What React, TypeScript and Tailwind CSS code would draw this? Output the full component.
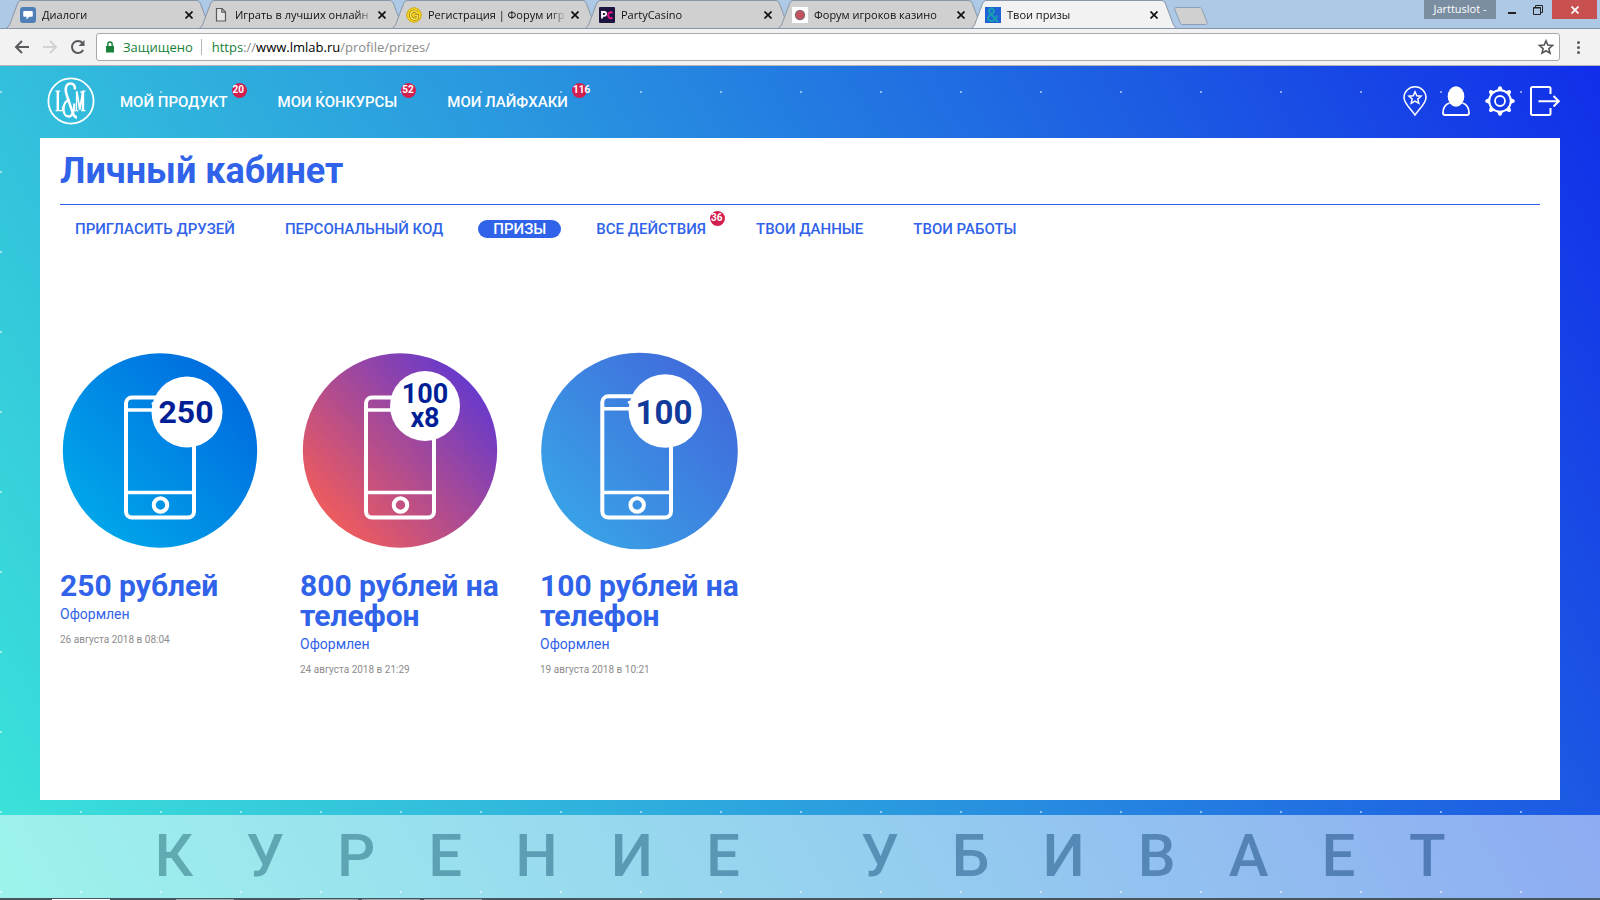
import type { ReactNode } from "react";
import clsx from "clsx";

type BrowserTab = {
  title: string;
  icon: ReactNode;
  active?: boolean;
};

const browserTabs: BrowserTab[] = [
  {
    title: "Диалоги",
    icon: (
      <svg viewBox="0 0 16 16" className="size-4">
        <rect width="16" height="16" rx="3" fill="#4f7fb9" />
        <path d="M4.5 4h7c.8 0 1.300.5 1.300 1.300v3.200c0 .8-.5 1.300-1.300 1.300H9.300L6.500 12.500V9.800h-2c-.8 0-1.300-.5-1.300-1.300V5.300C3.200 4.500 3.700 4 4.500 4z" fill="#fff" />
      </svg>
    ),
  },
  {
    title: "Играть в лучших онлайн",
    icon: (
      <svg viewBox="0 0 16 16" className="size-4" fill="none" stroke="#5a5a5a" strokeWidth="1.2">
        <path d="M3.500 1.500h5.500l3.500 3.500v9h-9z" fill="#e4e4e4" />
        <path d="M8.800 1.500V5.200h3.700" />
      </svg>
    ),
  },
  {
    title: "Регистрация | Форум игр",
    icon: (
      <svg viewBox="0 0 16 16" className="size-4">
        <circle cx="8" cy="8" r="7.300" fill="#fbd51c" stroke="#c9a81c" />
        <path d="M11.500 5.600C9.500 3.200 4.500 3.800 4.500 8s4.500 5.200 7 3.200V8.500H8.500" fill="none" stroke="#8f7a1e" strokeWidth="3" />
        <path d="M11.500 5.600C9.500 3.200 4.500 3.800 4.500 8s4.500 5.200 7 3.200V8.500H8.500" fill="none" stroke="#ffe54a" strokeWidth="1.600" />
      </svg>
    ),
  },
  {
    title: "PartyCasino",
    icon: (
      <svg viewBox="0 0 16 16" className="size-4" fill="none" strokeWidth="1.800">
        <rect width="16" height="16" rx="1" fill="#1d1440" />
        <path d="M3 11.500V5h2.200a1.800 1.800 0 0 1 0 3.800H3" stroke="#fff" />
        <path d="M13.500 6A2.600 3 0 1 0 13.500 10.500" stroke="#e5178a" />
      </svg>
    ),
  },
  {
    title: "Форум игроков казино",
    icon: (
      <svg viewBox="0 0 16 16" className="size-4">
        <rect width="16" height="16" fill="#fff" />
        <circle cx="8" cy="8" r="4.500" fill="#c4525c" stroke="#8a6a70" strokeWidth="1.400" />
      </svg>
    ),
  },
  {
    title: "Твои призы",
    active: true,
    icon: (
      <svg viewBox="0 0 16 16" className="size-4">
        <rect width="16" height="16" fill="#1f62d6" />
        <path d="M13 15L4.500 5.500C3.200 3.500 4.500 1.500 6.500 1.500s3.500 2.500 1.500 4.500L4.500 8.500c-2.500 2-1.500 5.500 2 5.500 2.800 0 5-2.500 5.500-5.500" fill="none" stroke="#17a0b0" strokeWidth="2" />
      </svg>
    ),
  },
];

const mainNav = [
  { label: "Мой продукт", count: 20 },
  { label: "Мои конкурсы", count: 52 },
  { label: "Мои лайфхаки", count: 116 },
];

const profileNav = [
  { label: "Пригласить друзей" },
  { label: "Персональный код" },
  { label: "Призы", active: true },
  { label: "Все действия", count: 36 },
  { label: "Твои данные" },
  { label: "Твои работы" },
];

const prizes = [
  {
    id: "p250",
    title: "250 рублей",
    status: "Оформлен",
    date: "26 августа 2018 в 08:04",
    from: "#00a6ea",
    to: "#006cdf",
    ink: "#001f96",
    lines: ["250"],
    size: 32,
    textX: 126,
    baseline: 73,
    disc: { cx: 100, cy: 100.5, r: 97.2 },
    phone: { x: 66, y: 47.5, width: 68 },
    badge: { cx: 127, cy: 62, r: 35.5 },
  },
  {
    id: "p800",
    title: "800 рублей на телефон",
    status: "Оформлен",
    date: "24 августа 2018 в 21:29",
    from: "#f05c5c",
    to: "#6639cc",
    ink: "#001f96",
    lines: ["100", "x8"],
    size: 27,
    textX: 125,
    baseline: 53,
    disc: { cx: 100, cy: 100.5, r: 97.2 },
    phone: { x: 66, y: 47.5, width: 68 },
    badge: { cx: 125, cy: 56, r: 35 },
  },
  {
    id: "p100",
    title: "100 рублей на телефон",
    status: "Оформлен",
    date: "19 августа 2018 в 10:21",
    from: "#39a2e7",
    to: "#406bdb",
    ink: "#123a9a",
    lines: ["100"],
    size: 33,
    textX: 124,
    baseline: 74,
    disc: { cx: 99.5, cy: 101, r: 98.3 },
    phone: { x: 62.3, y: 46.3, width: 68.7 },
    badge: { cx: 125.3, cy: 61, r: 36.7 },
  },
];

function TabShape({ active }: { active?: boolean }) {
  return (
    <svg viewBox="0 0 206 29" preserveAspectRatio="none" className="absolute inset-0 size-full">
      <path
        d="M0 28.500C3 27 4 24 5 21L11 5C12 2 13 .5 16 .5H190C193 .5 194 2 195 5L201 21C202 24 203 27 206 28.500"
        fill={active ? "#f2f2f2" : "#d0d0d0"}
        stroke="#8796a8"
      />
      {active && <path d="M0 28.500H206" stroke="#f2f2f2" strokeWidth="1" />}
    </svg>
  );
}

function CloseGlyph() {
  return (
    <svg viewBox="0 0 8 8" className="size-2" stroke="currentColor" strokeWidth="1.700">
      <path d="M.5.5l7 7M7.500.5l-7 7" />
    </svg>
  );
}

function BrowserChrome() {
  return (
    <div className="font-['Open_Sans',sans-serif] text-[#111]">
      <div className="relative flex h-[29px] items-start overflow-hidden border-b border-[#8796a8] bg-[#adc9e6] pl-[6px]">
        {browserTabs.map((tab) => (
          <div key={tab.title} className={clsx("relative -mr-[13px] flex h-[29px] w-[206px] shrink-0 items-center pr-[19px] pl-[14px]", tab.active && "z-10")}>
            <TabShape active={tab.active} />
            <span className="relative shrink-0">{tab.icon}</span>
            <span className="relative ml-[6px] flex-1 overflow-hidden [mask-image:linear-gradient(to_right,#000_88%,transparent)] pt-px text-[11px] whitespace-nowrap">
              {tab.title}
            </span>
            <button type="button" aria-label="Закрыть вкладку" className="relative ml-1">
              <CloseGlyph />
            </button>
          </div>
        ))}
        <button type="button" aria-label="Новая вкладка" className="mt-[7px] ml-[10px]">
          <svg viewBox="0 0 34 18" className="h-[18px] w-[34px]">
            <path d="M2 .5h23c1.500 0 2.500.5 3 2l5 12.500c.5 1.500 0 2.500-1.500 2.500H9c-1.500 0-2.500-.5-3-2L1 3C.5 1.500 1 .5 2 .5z" fill="#d0d0d0" stroke="#8ba0b6" />
          </svg>
        </button>
        <div className="ml-auto flex items-start">
          <span className="flex h-[19px] w-[72px] items-center justify-center bg-[#7a8da1] text-[11px] text-white">Jarttuslot -</span>
          <button type="button" aria-label="Свернуть" className="flex h-[19px] w-7 items-center justify-end">
            <span className="mt-[6px] mr-2 h-[2px] w-2 bg-[#222]" />
          </button>
          <button type="button" aria-label="Восстановить" className="flex h-[19px] w-7 items-center justify-center">
            <svg viewBox="0 0 10 10" className="size-[10px]" fill="none" stroke="#222">
              <path d="M.5 3h7M.5 2.500v7h7v-7zM2.500 2V.5h7v7H8" />
            </svg>
          </button>
          <button type="button" aria-label="Закрыть" className="mr-[3px] flex h-[19px] w-[45px] items-center justify-center bg-[#c8504f] text-white">
            <CloseGlyph />
          </button>
        </div>
      </div>

      <div className="flex h-[37px] items-center border-b border-[#b4b4b8] bg-[#f2f2f2] pl-[14px]">
        <button type="button" aria-label="Назад">
          <svg viewBox="0 0 16 16" className="size-4" fill="none" stroke="#5a5a5f" strokeWidth="2">
            <path d="M15 8H2.500M8 2L2 8l6 6" />
          </svg>
        </button>
        <button type="button" aria-label="Вперёд" className="ml-3">
          <svg viewBox="0 0 16 16" className="size-4" fill="none" stroke="#d2d2d4" strokeWidth="2">
            <path d="M1 8h12.500M8 2l6 6-6 6" />
          </svg>
        </button>
        <button type="button" aria-label="Обновить" className="ml-3">
          <svg viewBox="0 0 16 16" className="size-4" fill="none" stroke="#5a5a5f" strokeWidth="2">
            <path d="M13.200 11A6 6 0 1 1 12.500 4" />
            <path d="M14.500 1v6h-6z" fill="#5a5a5f" stroke="none" />
          </svg>
        </button>
        <label className="ml-[10px] flex h-7 flex-1 items-center rounded-[3px] border border-[#a9a9ab] bg-white pl-2 text-sm">
          <svg viewBox="0 0 10 12" className="h-3 w-[10px]">
            <path d="M1 5h8v6.500H1z" fill="#188038" />
            <path d="M2.800 5V3.200a2.200 2.200 0 0 1 4.400 0V5" fill="none" stroke="#188038" strokeWidth="1.400" />
          </svg>
          <span className="ml-2 text-[13px] text-[#188038]">Защищено</span>
          <span className="mr-[10px] ml-2 h-4 w-px bg-[#b5b5b5]" />
          <span className="text-[13px] text-[#8a8a8a]">
            <span className="text-[#188038]">https</span>://<span className="text-black">www.lmlab.ru</span>/profile/prizes/
          </span>
          <input type="text" aria-label="Адрес" className="min-w-0 flex-1 outline-none" />
          <button type="button" aria-label="Добавить в закладки" className="mr-[5px]">
            <svg viewBox="0 0 16 16" className="size-4" fill="none" stroke="#55555a" strokeWidth="1.600">
              <path d="M8 1.800l1.800 4.300 4.700.4-3.600 3.100 1.100 4.600L8 11.800l-4 2.400 1.100-4.600L1.500 6.500l4.700-.4z" />
            </svg>
          </button>
        </label>
        <button type="button" aria-label="Меню" className="mr-[18px] ml-[14px] flex w-2 flex-col items-center gap-[2px]">
          <span className="size-[3px] rounded-full bg-[#5a5a5f]" />
          <span className="size-[3px] rounded-full bg-[#5a5a5f]" />
          <span className="size-[3px] rounded-full bg-[#5a5a5f]" />
        </button>
      </div>
    </div>
  );
}

function CountBadge({ value }: { value: number }) {
  return (
    <span className="absolute -top-[9px] left-full ml-1 flex size-[15px] items-center rounded-full bg-[#d31f4f] pb-px pl-px text-[10px] leading-none font-bold text-white">
      {value}
    </span>
  );
}

function Logo() {
  return (
    <svg viewBox="0 0 48 48" className="size-12" fill="none" stroke="#fff">
      <circle cx="24" cy="24" r="22.600" strokeWidth="1.800" />
      <path d="M10.800 14v19.500" strokeWidth="2.400" />
      <path d="M8.500 14.200h4.700M8.500 33.600h7v-4" strokeWidth="1.200" />
      <path d="M29.500 34V14.500M27.800 33.700h3.600" strokeWidth="1.200" />
      <path d="M29.800 14.500l3 18 3-18" strokeWidth="1.800" />
      <path d="M36 14v19.500" strokeWidth="2.400" />
      <path d="M34 33.700h4.500M35 14.200h3.500" strokeWidth="1.200" />
      <path d="M30 40.500c-2 0-3-1.500-4-4L19.500 17.500C17.500 11 19.500 6.500 23.500 6.500c3.200 0 4.700 2.200 4.300 6" strokeWidth="2.500" />
      <path d="M22.500 22.500C18.500 24 16.500 28 16.500 32c0 4.500 2 7.500 5 7.500 4 0 6-5 5.800-13" strokeWidth="2.300" />
    </svg>
  );
}

function SiteHeader() {
  return (
    <header className="flex h-[72px] items-center pr-10 pb-[2px] pl-[47px]">
      <a href="#home" aria-label="L&M">
        <Logo />
      </a>
      <nav className="mt-[2px] ml-[25px] flex gap-[50px] text-[15px] leading-5 font-medium text-white uppercase">
        {mainNav.map((item) => (
          <a key={item.label} href="#nav" className="relative">
            {item.label}
            <CountBadge value={item.count} />
          </a>
        ))}
      </nav>
      <div className="ml-auto flex items-center gap-[15px]">
        <a href="#places" aria-label="Места">
          <svg viewBox="0 0 24 30" className="h-[30px] w-6" fill="none" stroke="#fff" strokeWidth="1.500">
            <path d="M12 29C9 24 1 18 1 11.500a11 10.700 0 0 1 22 0C23 18 15 24 12 29z" />
            <path d="M12 5.800l1.800 4 4.200.4-3.200 2.900 1 4.200L12 15.200l-3.800 2.100 1-4.200L6 10.200l4.200-.4z" />
          </svg>
        </a>
        <a href="#profile" aria-label="Профиль">
          <svg viewBox="0 0 28 30" className="h-[30px] w-7" fill="none" stroke="#fff" strokeWidth="1.800">
            <ellipse cx="14" cy="10.500" rx="8.300" ry="10.200" fill="#fff" stroke="none" />
            <path d="M7.500 17C3 18.500 1 22 1 27c0 1.500.5 2 2 2h22c1.500 0 2-.5 2-2 0-5-2-8.500-6.500-10" />
          </svg>
        </a>
        <a href="#settings" aria-label="Настройки">
          <svg viewBox="0 0 30 30" className="size-[30px]" fill="none" stroke="#fff">
            <circle cx="15" cy="15" r="10.800" strokeWidth="2" />
            <circle cx="15" cy="15" r="5" strokeWidth="1.800" />
            <g fill="#fff" stroke="none">
              {[0, 45, 90, 135, 180, 225, 270, 315].map((deg) => (
                <path key={deg} d="M12 4.500l1.200-3a1.900 1.900 0 0 1 3.600 0l1.200 3z" transform={`rotate(${deg} 15 15)`} />
              ))}
            </g>
          </svg>
        </a>
        <a href="#logout" aria-label="Выйти">
          <svg viewBox="0 0 30 30" className="size-[30px]" fill="none" stroke="#fff" strokeWidth="2">
            <path d="M20.500 8V2.500c0-1-.5-1.500-1.500-1.500H2.500C1.500 1 1 1.500 1 2.500v25c0 1 .5 1.500 1.500 1.500H19c1 0 1.500-.5 1.500-1.500V22" />
            <path d="M8.500 15.200h20M23.500 10l5.300 5.200-5.300 5.300" />
          </svg>
        </a>
      </div>
    </header>
  );
}

function PrizeArt({ prize }: { prize: (typeof prizes)[number] }) {
  const { badge, disc, phone } = prize;
  const right = phone.x + phone.width;
  return (
    <svg viewBox="0 0 200 200" className="size-[200px]" role="img" aria-label={prize.title}>
      <defs>
        <linearGradient id={prize.id} x1="0.12" y1="0.85" x2="0.88" y2="0.15">
          <stop offset="0" stopColor={prize.from} />
          <stop offset="1" stopColor={prize.to} />
        </linearGradient>
      </defs>
      <circle cx={disc.cx} cy={disc.cy} r={disc.r} fill={`url(#${prize.id})`} />
      <g fill="none" stroke="#fff" strokeWidth="4">
        <rect x={phone.x} y={phone.y} width={phone.width} height={167.5 - phone.y} rx="6" />
        <path d={`M${phone.x} ${phone.y + 12.5}H${right}M${phone.x} 142.500H${right}`} strokeWidth="3.500" />
        <circle cx={phone.x + phone.width / 2 + 0.5} cy="155" r="6.700" />
        <path d={`M${phone.x + 27} ${phone.y + 6}h14`} strokeWidth="3" strokeLinecap="round" />
      </g>
      <circle cx={badge.cx} cy={badge.cy} r={badge.r} fill="#fff" />
      {prize.lines.map((line, i) => (
        <text
          key={line}
          x={prize.textX}
          y={prize.baseline + i * 24}
          textAnchor="middle"
          fontSize={prize.size}
          fill={prize.ink}
          className="font-bold"
        >
          {line}
        </text>
      ))}
    </svg>
  );
}

export default function App() {
  return (
    <div className="flex min-h-screen flex-col font-[Roboto,sans-serif]">
      <BrowserChrome />

      <div className="flex flex-1 flex-col bg-[radial-gradient(circle_at_1px_1px,rgba(255,255,255,0.5)_1px,transparent_1px),linear-gradient(60deg,#3be6d9_0%,#2a9adf_45%,#1a50e4_83%,#112eea_100%)] bg-[size:80px_80px,100%_100%] bg-[position:0_25px,0_0]">
        <SiteHeader />

        <main className="mx-10 flex-1 bg-white px-5 pt-[9px] text-[#3063e9]">
          <h1 className="text-4xl leading-[48px] font-bold">Личный кабинет</h1>
          <nav className="mt-[9px] flex gap-5 border-t border-[#3063e9] pt-[15px] text-[15px] leading-[18px] font-medium uppercase">
            {profileNav.map((item) => (
              <a
                key={item.label}
                href="#section"
                className={clsx("rounded-full px-[15px]", item.active && "bg-[#3063e9] text-white")}
              >
                <span className="relative">
                  {item.label}
                  {item.count && <CountBadge value={item.count} />}
                </span>
              </a>
            ))}
          </nav>

          <section className="mt-28 flex gap-10">
            {prizes.map((prize) => (
              <article key={prize.id} className="w-[200px]">
                <PrizeArt prize={prize} />
                <h2 className="mt-[21px] text-3xl leading-[30px] font-bold">{prize.title}</h2>
                <p className="mt-[3px] text-sm leading-5">{prize.status}</p>
                <p className="mt-[10px] text-[10px] leading-3 text-[#8c8c8c]">{prize.date}</p>
              </article>
            ))}
          </section>
        </main>

        <footer className="mt-[15px] flex h-[83px] items-center justify-center bg-white/50 pb-[2px]">
          <p className="bg-linear-to-r from-[#61adb1] to-[#5179b7] bg-clip-text pl-[53px] text-6xl font-medium tracking-[53px] whitespace-nowrap text-transparent">
            КУРЕНИЕ УБИВАЕТ
          </p>
        </footer>
      </div>

      <div className="flex h-[2px] gap-1 bg-[#46565c] pt-px pl-[52px]">
        <span className="mr-[62px] w-[58px] bg-white" />
        <span className="mr-[62px] w-[58px] bg-[#9aa7aa]" />
        <span className="w-[58px] bg-[#9aa7aa]" />
        <span className="w-[58px] bg-[#9aa7aa]" />
        <span className="w-[58px] bg-[#9aa7aa]" />
      </div>
    </div>
  );
}
